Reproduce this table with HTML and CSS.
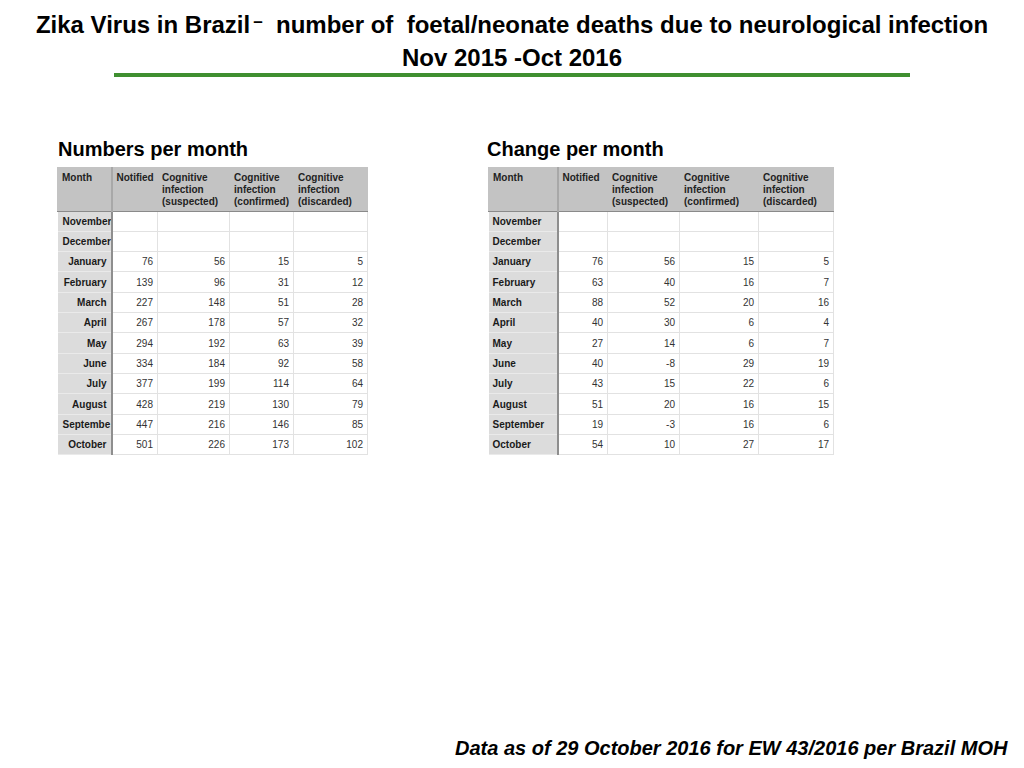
FILE: index.html
```html
<!DOCTYPE html>
<html>
<head>
<meta charset="utf-8">
<link rel="stylesheet" href="styles.css">
</head>
<body>
<header class="title">
  <div class="title-line">Zika Virus in Brazil<span class="dash">–</span>  number of  foetal/neonate deaths due to neurological infection</div>
  <div class="title-line">Nov 2015 -Oct 2016</div>
  <div class="rule"></div>
</header>
<main class="panels">
  <section class="panel panel-left">
    <h2>Numbers per month</h2>
    <table class="grid grid-left">
      <colgroup><col class="c1"><col class="c2"><col class="c3"><col class="c4"><col class="c5"></colgroup>
      <thead><tr><th>Month</th><th>Notified</th><th>Cognitive infection (suspected)</th><th>Cognitive infection (confirmed)</th><th>Cognitive infection (discarded)</th></tr></thead>
      <tbody>
        <tr><th>November</th><td></td><td></td><td></td><td></td></tr>
        <tr><th>December</th><td></td><td></td><td></td><td></td></tr>
        <tr><th>January</th><td>76</td><td>56</td><td>15</td><td>5</td></tr>
        <tr><th>February</th><td>139</td><td>96</td><td>31</td><td>12</td></tr>
        <tr><th>March</th><td>227</td><td>148</td><td>51</td><td>28</td></tr>
        <tr><th>April</th><td>267</td><td>178</td><td>57</td><td>32</td></tr>
        <tr><th>May</th><td>294</td><td>192</td><td>63</td><td>39</td></tr>
        <tr><th>June</th><td>334</td><td>184</td><td>92</td><td>58</td></tr>
        <tr><th>July</th><td>377</td><td>199</td><td>114</td><td>64</td></tr>
        <tr><th>August</th><td>428</td><td>219</td><td>130</td><td>79</td></tr>
        <tr><th>Septembe</th><td>447</td><td>216</td><td>146</td><td>85</td></tr>
        <tr><th>October</th><td>501</td><td>226</td><td>173</td><td>102</td></tr>
      </tbody>
    </table>
  </section>
  <section class="panel panel-right">
    <h2>Change per month</h2>
    <table class="grid grid-right">
      <colgroup><col class="c1"><col class="c2"><col class="c3"><col class="c4"><col class="c5"></colgroup>
      <thead><tr><th>Month</th><th>Notified</th><th>Cognitive infection (suspected)</th><th>Cognitive infection (confirmed)</th><th>Cognitive infection (discarded)</th></tr></thead>
      <tbody>
        <tr><th>November</th><td></td><td></td><td></td><td></td></tr>
        <tr><th>December</th><td></td><td></td><td></td><td></td></tr>
        <tr><th>January</th><td>76</td><td>56</td><td>15</td><td>5</td></tr>
        <tr><th>February</th><td>63</td><td>40</td><td>16</td><td>7</td></tr>
        <tr><th>March</th><td>88</td><td>52</td><td>20</td><td>16</td></tr>
        <tr><th>April</th><td>40</td><td>30</td><td>6</td><td>4</td></tr>
        <tr><th>May</th><td>27</td><td>14</td><td>6</td><td>7</td></tr>
        <tr><th>June</th><td>40</td><td>-8</td><td>29</td><td>19</td></tr>
        <tr><th>July</th><td>43</td><td>15</td><td>22</td><td>6</td></tr>
        <tr><th>August</th><td>51</td><td>20</td><td>16</td><td>15</td></tr>
        <tr><th>September</th><td>19</td><td>-3</td><td>16</td><td>6</td></tr>
        <tr><th>October</th><td>54</td><td>10</td><td>27</td><td>17</td></tr>
      </tbody>
    </table>
  </section>
</main>
<footer class="source">Data as of 29 October 2016 for EW 43/2016 per Brazil MOH</footer>
</body>
</html>
```
FILE: styles.css
```css
html, body {
  margin: 0;
  padding: 0;
  background: #ffffff;
}
body {
  width: 1024px;
  height: 768px;
  position: relative;
  font-family: "Liberation Sans", Arial, sans-serif;
  color: #000;
  overflow: hidden;
}
.title {
  padding-top: 8px;
  text-align: center;
  font-weight: bold;
  font-size: 24px;
  line-height: 33px;
}
.title-line {
  white-space: pre;
  height: 33px;
}
.dash {
  position: relative;
  top: -6px;
  font-size: 17px;
  line-height: 1;
  margin-left: 3px;
}
.rule {
  width: 796px;
  height: 4px;
  margin: -1px 0 0 114px;
  background: #3f8f30;
}
.panels {
  display: flex;
  padding-top: 62px;
}
.panel h2 {
  margin: 0 0 8px 1px;
  font-size: 20px;
  line-height: 20px;
  font-weight: bold;
}
.panel-left {
  margin-left: 57px;
}
.panel-right {
  margin-left: 120px;
}
.panel-right h2 {
  margin-left: -1px;
}
.grid {
  border-collapse: collapse;
  table-layout: fixed;
  font-size: 10px;
}
.grid-left { width: 310px; }
.grid-right { width: 345px; }
.grid-left .c1 { width: 54px; }
.grid-left .c2 { width: 46px; }
.grid-left .c3 { width: 72px; }
.grid-left .c4 { width: 64px; }
.grid-left .c5 { width: 74px; }
.grid-right .c1 { width: 69px; }
.grid-right .c2 { width: 50px; }
.grid-right .c3 { width: 72px; }
.grid-right .c4 { width: 79px; }
.grid-right .c5 { width: 75px; }
.grid thead th {
  background: #c3c3c3;
  height: 44px;
  box-sizing: border-box;
  vertical-align: top;
  text-align: left;
  padding: 5px 4px 0 4px;
  font-weight: bold;
  line-height: 12px;
  color: #222;
  border-bottom: 1px solid #8a8a8a;
  border-left: 1px solid #c3c3c3;
}
.grid tbody tr {
  height: 20.33px;
}
.grid tbody th {
  background: #dcdcdc;
  font-weight: bold;
  color: #1a1a1a;
  padding: 0 4px;
  white-space: nowrap;
  overflow: hidden;
  border-bottom: 1px solid #eaeaea;
  border-right: 2px solid #8e8e8e;
}
.grid-left tbody th {
  text-align: right;
  padding-left: 5px;
}
.grid-right tbody th {
  text-align: left;
}
.grid thead th:first-child {
  border-right: 2px solid #a8a8a8;
}
.grid td {
  text-align: right;
  padding: 0 4px;
  color: #333;
  border: 1px solid #e2e2e2;
}
.source {
  position: absolute;
  left: 455px;
  top: 735px;
  font-weight: bold;
  font-style: italic;
  font-size: 20px;
  line-height: 26px;
  white-space: nowrap;
}
```
